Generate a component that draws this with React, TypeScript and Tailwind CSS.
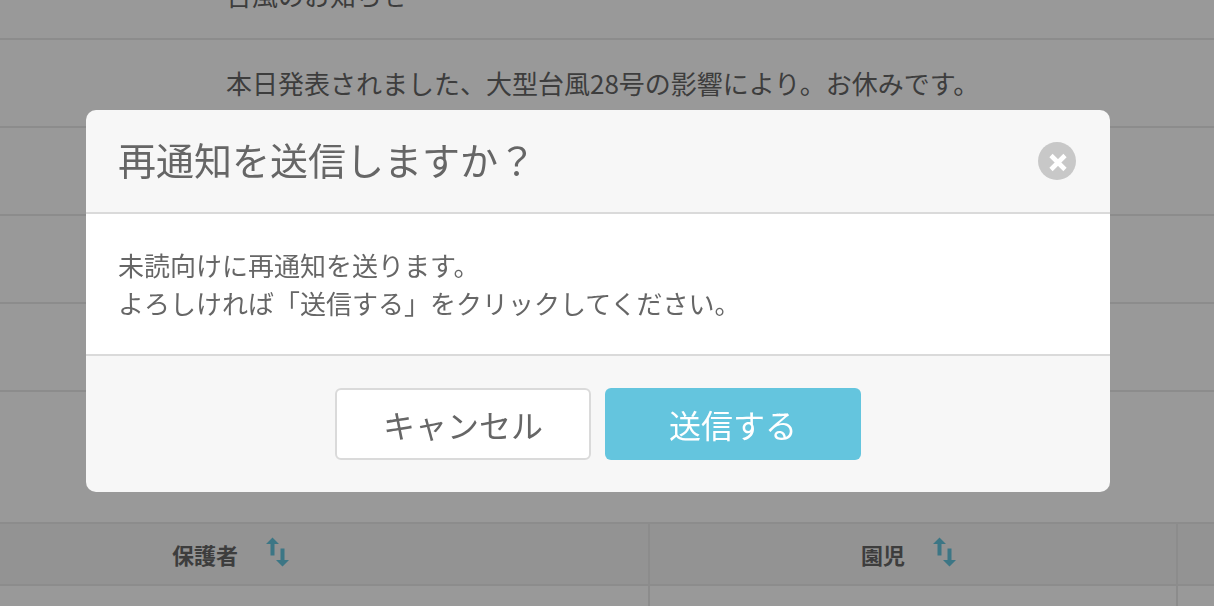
import { useState } from 'react'

const notices = [
  '台風のお知らせ',
  '本日発表されました、大型台風28号の影響により。お休みです。',
  '',
  '',
  '',
  '',
]

function SortButton({ label }: { label: string }) {
  return (
    <button type="button" aria-label={label} className="-mt-1 block">
      <svg className="h-[30px] w-[24px]" viewBox="0 0 24 30" fill="#64c5de" aria-hidden="true">
        <path d="M6.500 0.500 L13 7 H8.500 V18.500 H4.500 V7 H0 Z" />
        <path d="M14.500 11.500 H18.500 V23 H23 L16.500 29.500 L10 23 H14.500 Z" />
      </svg>
    </button>
  )
}

export default function App() {
  const [open, setOpen] = useState(true)

  return (
    <div className="relative h-screen overflow-hidden bg-white text-[26px] leading-[38px] text-[#666] font-['Noto_Sans_CJK_JP',sans-serif]">
      <main className="-mt-12">
        <ul>
          {notices.map((notice, index) => (
            <li key={index} className="flex h-[88px] items-center border-b-2 border-[#eaeaea] pl-[226px] last:border-b-0">
              <p className="whitespace-nowrap">{notice}</p>
            </li>
          ))}
        </ul>
        <table className="mt-[42px] w-full table-fixed border-collapse">
          <colgroup>
            <col className="w-[649px]" />
            <col className="w-[528px]" />
            <col />
          </colgroup>
          <thead className="bg-[#f5f5f5] text-[22px]">
            <tr className="h-[62px]">
              <th className="border-y-2 border-r-2 border-[#eaeaea] p-0">
                <div className="flex items-center gap-7 pl-[172px]">
                  保護者
                  <SortButton label="保護者で並べ替え" />
                </div>
              </th>
              <th className="border-2 border-[#eaeaea] p-0">
                <div className="flex items-center justify-center gap-7 pr-2">
                  園児
                  <SortButton label="園児で並べ替え" />
                </div>
              </th>
              <th className="border-y-2 border-l-2 border-[#eaeaea] p-0"></th>
            </tr>
          </thead>
          <tbody>
            <tr className="h-[88px]">
              <td className="border-2 border-l-0 border-[#eaeaea]"></td>
              <td className="border-2 border-[#eaeaea]"></td>
              <td className="border-2 border-r-0 border-[#eaeaea]"></td>
            </tr>
          </tbody>
        </table>
      </main>

      {open && (
        <div className="fixed inset-0 flex items-start justify-center bg-black/40 pt-[110px] pr-[18px]">
          <div role="dialog" aria-modal="true" aria-labelledby="dialog-title" className="w-full max-w-5xl overflow-hidden rounded-[10px] bg-[#f7f7f7]">
            <div className="flex items-center justify-between border-b-2 border-[#dadada] pt-[22px] pr-[34px] pb-[26px] pl-8">
              <h1 id="dialog-title" className="text-[38px] leading-[54px]">再通知を送信しますか？</h1>
              <button type="button" aria-label="閉じる" onClick={() => setOpen(false)} className="mt-1 size-[38px] rounded-full bg-[#c8c8c8]">
                <svg viewBox="0 0 38 38" className="size-[38px]" stroke="#fff" strokeWidth="4.600" aria-hidden="true">
                  <path d="M13 13.500 L27 27.500 M27 13.500 L13 27.500" />
                </svg>
              </button>
            </div>
            <div className="border-b-2 border-[#dadada] bg-white px-8 py-8">
              <p>
                未読向けに再通知を送ります。
                <br />
                よろしければ「送信する」をクリックしてください。
              </p>
            </div>
            <div className="flex justify-center gap-[14px] py-8 text-[32px]">
              <button type="button" onClick={() => setOpen(false)} className="h-[72px] w-64 rounded-md border-2 border-[#dadada] bg-white">
                キャンセル
              </button>
              <button type="button" onClick={() => setOpen(false)} className="h-[72px] w-64 rounded-md bg-[#64c5de] text-white">
                送信する
              </button>
            </div>
          </div>
        </div>
      )}
    </div>
  )
}
